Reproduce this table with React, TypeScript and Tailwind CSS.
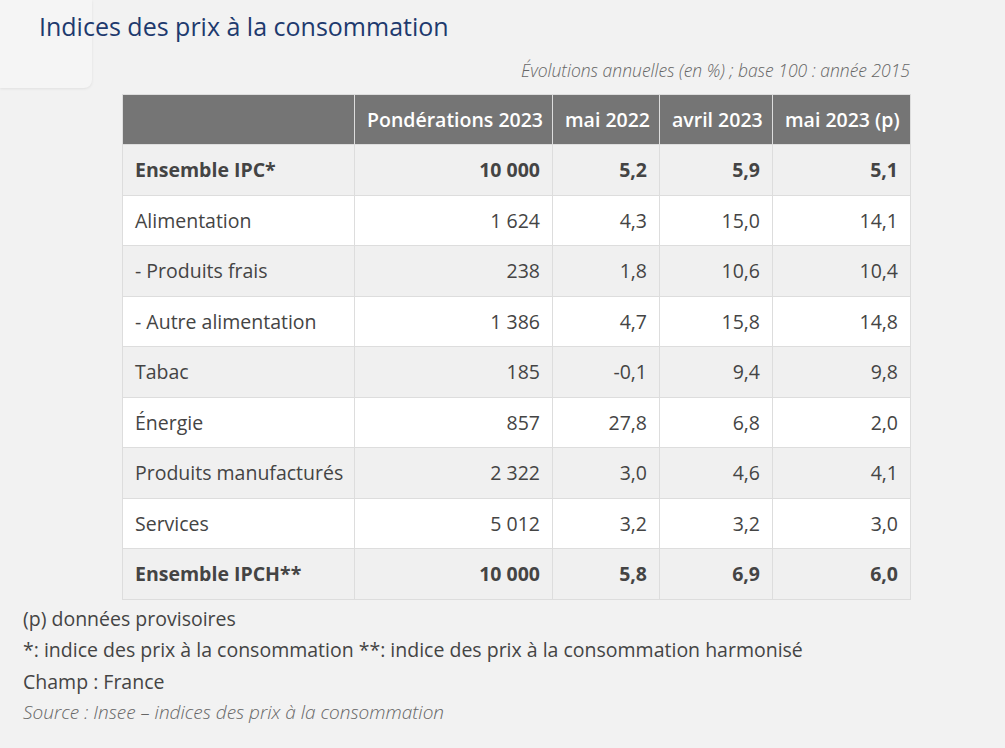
import React from "react"

type Row = {
  label: string
  values: string[]
  bold?: boolean
}

const rows: Row[] = [
  { label: "Ensemble IPC*", values: ["10 000", "5,2", "5,9", "5,1"], bold: true },
  { label: "Alimentation", values: ["1 624", "4,3", "15,0", "14,1"] },
  { label: "- Produits frais", values: ["238", "1,8", "10,6", "10,4"] },
  { label: "- Autre alimentation", values: ["1 386", "4,7", "15,8", "14,8"] },
  { label: "Tabac", values: ["185", "-0,1", "9,4", "9,8"] },
  { label: "Énergie", values: ["857", "27,8", "6,8", "2,0"] },
  { label: "Produits manufacturés", values: ["2 322", "3,0", "4,6", "4,1"] },
  { label: "Services", values: ["5 012", "3,2", "3,2", "3,0"] },
  { label: "Ensemble IPCH**", values: ["10 000", "5,8", "6,9", "6,0"], bold: true },
]

const headers = ["Pondérations 2023", "mai 2022", "avril 2023", "mai 2023 (p)"]
const colWidths = ["w-[232px]", "w-[198px]", "w-[107px]", "w-[113px]", "w-[138px]"]

export default function App() {
  return (
    <div className="relative min-h-[748px] w-[1005px] overflow-hidden bg-[#f2f2f2] font-['Open_Sans',sans-serif] text-[#444]">
      {/* carte en haut à gauche */}
      <div className="absolute left-0 top-0 h-[88px] w-[92px] rounded-br-lg bg-[#f5f5f5] shadow-[0_1px_3px_rgba(0,0,0,0.08)]" />

      <div className="relative">
        <h1 className="pl-[39px] pt-[9px] text-[25px] font-medium leading-[34px] text-[#1e3a6e]">
          Indices des prix à la consommation
        </h1>

        <p className="mt-[15px] w-[910px] text-right text-[17.5px] font-light italic leading-[24px] text-[#666]">
          Évolutions annuelles (en %) ; base 100 : année 2015
        </p>

        <table className="ml-[122px] mt-[12px] w-[788px] table-fixed border-collapse text-[19.5px]">
          <colgroup>
            {colWidths.map((w, i) => (
              <col key={i} className={w} />
            ))}
          </colgroup>
          <thead>
            <tr className="h-[50px] bg-[#757575] text-white">
              <th className="border border-[#dddddd]" />
              {headers.map((h) => (
                <th
                  key={h}
                  className="border border-[#dddddd] px-3 text-center font-semibold whitespace-nowrap"
                >
                  {h}
                </th>
              ))}
            </tr>
          </thead>
          <tbody>
            {rows.map((row, i) => (
              <tr
                key={row.label}
                className={`h-[50.5px] ${i % 2 === 0 ? "bg-[#f0f0f0]" : "bg-white"} ${
                  row.bold ? "font-bold" : ""
                }`}
              >
                <td className="border border-[#dddddd] px-3 whitespace-nowrap">{row.label}</td>
                {row.values.map((v, j) => (
                  <td key={j} className="border border-[#dddddd] px-3 text-right">
                    {v}
                  </td>
                ))}
              </tr>
            ))}
          </tbody>
        </table>

        <div className="pl-[23px] pt-[3px] text-[19.5px] leading-[31.5px] text-[#444]">
          <p>(p) données provisoires</p>
          <p>*: indice des prix à la consommation **: indice des prix à la consommation harmonisé</p>
          <p>Champ : France</p>
          <p className="text-[19px] font-light italic text-[#666]">
            Source : Insee – indices des prix à la consommation
          </p>
        </div>
      </div>
    </div>
  )
}
